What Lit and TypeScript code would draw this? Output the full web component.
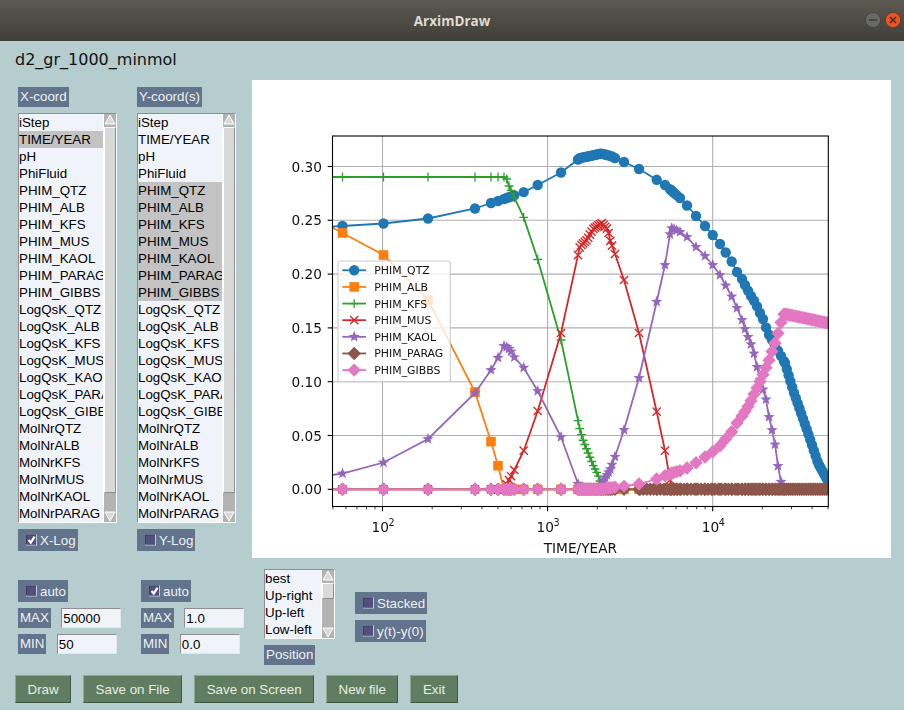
import { LitElement, html, css, svg } from 'lit';
import { customElement, property } from 'lit/decorators.js';

const BASE = 489.3;
const COLORS = ['#1f77b4', '#ff7f0e', '#2ca02c', '#d62728', '#9467bd', '#8c564b', '#e377c2'];
const NAMES = ['PHIM_QTZ', 'PHIM_ALB', 'PHIM_KFS', 'PHIM_MUS', 'PHIM_KAOL', 'PHIM_PARAG', 'PHIM_GIBBS'];

// sample positions, page pixels along the log axis
const XS: number[] = [
  325, 342.5, 383.5, 428, 475, 491, 498, 504, 506.7, 509, 511, 514.3, 523.7, 537.7, 561,
];
for (let x = 578; x < 613; x += 1.7) XS.push(x);
XS.push(615, 624, 639, 656.7, 665, 670, 671.7, 674, 676.7, 680, 687, 696, 705, 712.7, 720, 725.7, 731.7, 737);
for (let x = 742; x < 785; x += 3) XS.push(x);
for (let x = 785; x < 836; x += 1.8) XS.push(x);

// parag sits on the baseline and its markers run almost solid past the first rise
const PARAG_XS = [...XS];
for (let x = 640; x < 785; x += 3.4) PARAG_XS.push(x);

type Pt = [number, number];

const CURVES: Pt[][] = [
  [[325, 227], [342.5, 226], [383.5, 223.5], [428, 218.5], [475, 208.5], [491, 203], [498, 201], [504, 199], [514, 195.5],
    [524, 192], [537.7, 185], [561, 172.5], [580, 158], [590, 156], [601, 153.5], [611, 156], [615, 158], [624, 162], [639, 169],
    [657, 180], [665, 185], [672, 191], [680, 198], [687, 205.5], [696, 216], [705, 226], [712.7, 235], [720, 244], [726, 253],
    [732, 262], [737, 272], [742, 279], [746, 287], [751, 296], [756, 304], [759, 311], [763, 319], [768, 333], [785, 363],
    [793, 390], [807, 430], [818, 463], [830, 485]],
  [[325, 224], [342.5, 233], [383.5, 255], [429, 301], [475, 392], [491, 441.6], [498, 465.7], [504, BASE], [840, BASE]],
  [[325, 177], [504, 177], [506.7, 179], [509, 186], [514, 197], [524, 218], [537.7, 259.5], [561, 340], [580, 430], [583, 440],
    [587, 450], [593, 465], [598, 475], [603, BASE], [840, BASE]],
  [[325, BASE], [504, BASE], [509, 480], [514.3, 470], [523.7, 450.7], [537.7, 411], [561, 333], [580, 246], [587, 240], [593, 229],
    [602, 223], [608, 230], [610, 240], [615, 254], [624, 280], [639, 333], [656.7, 411.7], [665, 450.7], [670, 480], [672, BASE], [840, BASE]],
  [[325, 476], [342.5, 473.5], [383.5, 462.5], [428, 439], [475, 393], [491, 370], [498, 357.7], [504, 346], [507, 347], [510, 349.7],
    [514, 357], [524, 368], [537.7, 391], [561, 437], [580, BASE], [598, BASE], [605, 478], [610, 470], [615, 456.7], [624, 430], [639, 378],
    [656.7, 301.7], [665, 265], [671, 228], [674, 229], [680, 232], [687, 237], [696, 247], [705, 256], [712.7, 265], [720, 275], [726, 286],
    [732, 297], [737, 308], [742, 320], [746, 332], [751.7, 346], [755.7, 359], [758, 373], [766.7, 401.7], [769, 417], [772.7, 433],
    [775.7, 448], [778, 466], [781, 481.7], [785, BASE], [840, BASE]],
  [[325, BASE], [840, BASE]],
  [[325, BASE], [600, BASE], [625, 486], [639, 484], [656.7, 479], [665, 475.7], [673, 472.7], [680, 470.7], [687, 468], [696, 462.7], [705, 457],
    [712.7, 451.7], [720, 445.7], [725.7, 439], [731.7, 431.7], [737, 423], [742, 416], [746.7, 409], [751, 400.7], [760.7, 380], [768, 363],
    [776, 340], [780, 326.7], [783, 314], [790, 315], [830, 323.5]],
];

const interp = (pts: Pt[], x: number) => {
  for (let i = 1; i < pts.length; i++) {
    if (x <= pts[i][0]) {
      const [x0, y0] = pts[i - 1];
      const [x1, y1] = pts[i];
      return y0 + ((y1 - y0) * (x - x0)) / (x1 - x0);
    }
  }
  return pts[pts.length - 1][1];
};

const starPoints = (x: number, y: number, r: number) => {
  const out: string[] = [];
  for (let i = 0; i < 10; i++) {
    const a = (Math.PI * i) / 5 - Math.PI / 2;
    const rr = i % 2 ? r * 0.42 : r;
    out.push(`${(x + rr * Math.cos(a)).toFixed(2)},${(y + rr * Math.sin(a)).toFixed(2)}`);
  }
  return out.join(' ');
};

const marker = (kind: number, x: number, y: number, c: string) => {
  switch (kind) {
    case 0:
      return svg`<circle cx=${x} cy=${y} r="5.2" fill=${c} />`;
    case 1:
      return svg`<rect x=${x - 4.8} y=${y - 4.8} width="9.6" height="9.6" fill=${c} />`;
    case 2:
      return svg`<path d="M${x - 4.4} ${y}H${x + 4.4}M${x} ${y - 4.4}V${y + 4.4}" stroke=${c} stroke-width="1.3" fill="none" />`;
    case 3:
      return svg`<path d="M${x - 4.1} ${y - 4.1}L${x + 4.1} ${y + 4.1}M${x + 4.1} ${y - 4.1}L${x - 4.1} ${y + 4.1}" stroke=${c} stroke-width="1.4" fill="none" />`;
    case 4:
      return svg`<polygon points=${starPoints(x, y, 5.9)} fill=${c} />`;
    default:
      return svg`<path d="M${x} ${y - 6.7}L${x + 6.7} ${y}L${x} ${y + 6.7}L${x - 6.7} ${y}Z" fill=${c} />`;
  }
};

@customElement('plot-figure')
export class PlotFigure extends LitElement {
  static styles = css`
    :host {
      display: block;
      width: 639px;
      height: 478px;
      background: #fff;
    }
    svg {
      display: block;
      filter: blur(0.3px);
    }
    text {
      font-family: 'DejaVu Sans', sans-serif;
      fill: #111;
    }
    .tick {
      font-size: 13.7px;
    }
    .sup {
      font-size: 9.6px;
    }
    .leg {
      font-size: 10.9px;
    }
  `;

  render() {
    const yTicks = [0, 0.05, 0.1, 0.15, 0.2, 0.25, 0.3];
    const yPos = (v: number) => BASE - v * 1076;
    const xPos = (t: number) => 382.5 + 165.1 * (Math.log10(t) - 2);
    const minor: number[] = [];
    for (const d of [10, 100, 1000, 10000]) {
      for (let m = 2; m < 10; m++) {
        const t = d * m;
        if (t >= 50 && t <= 50000) minor.push(xPos(t));
      }
    }
    return html`
      <svg width="639" height="478" viewBox="252 80 639 478">
        <defs>
          <clipPath id="axes"><rect x="332.5" y="136" width="495.8" height="370.5" /></clipPath>
        </defs>
        ${[100, 1000, 10000].map(
          (t) => svg`<line x1=${xPos(t)} x2=${xPos(t)} y1="136" y2="506.5" stroke="#b0b0b0" stroke-width="1.1" />`,
        )}
        ${yTicks.map(
          (v) => svg`<line x1="332.5" x2="828.3" y1=${yPos(v)} y2=${yPos(v)} stroke="#b0b0b0" stroke-width="1.1" />`,
        )}
        <g clip-path="url(#axes)">
          ${CURVES.map((pts, i) => {
            const line = XS.map((x) => `${x},${interp(pts, x).toFixed(2)}`).join(' ');
            const xs = i === 5 ? PARAG_XS : XS;
            return svg`
              <polyline points=${line} fill="none" stroke=${COLORS[i]} stroke-width="1.8" />
              ${xs.map((x) => marker(i, x, interp(pts, x), COLORS[i]))}
            `;
          })}
        </g>
        <rect x="332.5" y="136" width="495.8" height="370.5" fill="none" stroke="#000" stroke-width="1.1" />
        ${yTicks.map(
          (v) => svg`
            <line x1="327.7" x2="332.5" y1=${yPos(v)} y2=${yPos(v)} stroke="#000" stroke-width="1.1" />
            <text class="tick" x="322" y=${yPos(v) + 5} text-anchor="end">${v.toFixed(2)}</text>
          `,
        )}
        ${minor.map((x) => svg`<line x1=${x} x2=${x} y1="506.5" y2="509.3" stroke="#000" stroke-width="0.8" />`)}
        ${[
          [100, '2'],
          [1000, '3'],
          [10000, '4'],
        ].map(
          ([t, e]) => svg`
            <line x1=${xPos(t as number)} x2=${xPos(t as number)} y1="506.5" y2="511.3" stroke="#000" stroke-width="1.1" />
            <text class="tick" x=${xPos(t as number) - 11} y="531.5">10</text>
            <text class="sup" x=${xPos(t as number) + 6} y="525.5">${e}</text>
          `,
        )}
        <text class="tick" x="580.4" y="552.5" text-anchor="middle">TIME/YEAR</text>
        <rect x="338" y="261" width="112.3" height="120.6" rx="2" fill="#fff" fill-opacity="0.8" stroke="#ccc" stroke-width="1.1" />
        ${NAMES.map((name, i) => {
          const y = 270.3 + i * 16.63;
          return svg`
            <line x1="342.3" x2="366" y1=${y} y2=${y} stroke=${COLORS[i]} stroke-width="1.8" />
            ${marker(i, 354.2, y, COLORS[i])}
            <text class="leg" x="374.3" y=${y + 4}>${name}</text>
          `;
        })}
      </svg>
    `;
  }
}

@customElement('list-box')
export class ListBox extends LitElement {
  static styles = css`
    :host {
      display: flex;
      box-sizing: border-box;
      background: #f0f4fa;
      border: 1px solid #8e8e8e;
      border-right-color: #fff;
      border-bottom-color: #fff;
      font: 13.33px 'Liberation Sans', Arial, sans-serif;
      color: #000;
    }
    .items {
      flex: 1;
      min-width: 0;
      overflow: hidden;
      border-top: 1px solid #8e8e8e;
      border-left: 1px solid #8e8e8e;
      margin: -1px 0 0 -1px;
    }
    .item {
      height: 17px;
      line-height: 17px;
      white-space: nowrap;
      overflow: hidden;
    }
    .item.sel {
      background: #c3c3c3;
    }
    .bar {
      flex: none;
      width: 12px;
      display: flex;
      flex-direction: column;
      background: #b3b3b3;
      border-left: 1px solid #fff;
    }
    .arrow {
      flex: none;
      display: block;
      width: 12px;
      height: 11px;
    }
    .thumb {
      flex: none;
      box-sizing: border-box;
      background: #d9d9d9;
      border: 1px solid #fff;
      border-right-color: #8e8e8e;
      border-bottom-color: #8e8e8e;
    }
    .gap {
      flex: 1;
    }
  `;

  @property({ type: Array }) items: string[] = [];
  @property({ type: Array }) selected: string[] = [];
  @property({ type: Number }) thumbTop = 0;
  @property({ type: Number }) thumbHeight = 0;

  render() {
    return html`
      <div class="items">
        ${this.items.map(
          (it) => html`<div class="item ${this.selected.includes(it) ? 'sel' : ''}">${it}</div>`,
        )}
      </div>
      <div class="bar">
        <svg class="arrow" viewBox="0 0 12 11"><path d="M6 1L11 10H1Z" fill="#d9d9d9" stroke="#fff" /></svg>
        <div class="thumb" style="margin-top:${this.thumbTop}px;height:${this.thumbHeight}px"></div>
        <div class="gap"></div>
        <svg class="arrow" viewBox="0 0 12 11"><path d="M6 10L11 1H1Z" fill="#d9d9d9" stroke="#fff" /></svg>
      </div>
    `;
  }
}

const QS = ['QTZ', 'ALB', 'KFS', 'MUS', 'KAOL', 'PARAG', 'GIBBS'];
const COLUMNS = [
  'iStep',
  'TIME/YEAR',
  'pH',
  'PhiFluid',
  ...QS.map((q) => `PHIM_${q}`),
  ...QS.map((q) => `LogQsK_${q}`),
  ...QS.slice(0, 6).map((q) => `MolNr${q}`),
];

@customElement('app-root')
export class AppRoot extends LitElement {
  static styles = css`
    :host {
      display: block;
      width: 904px;
      height: 710px;
      overflow: hidden;
      background: #b5cdce;
      font: 13.33px 'Liberation Sans', Arial, sans-serif;
    }
    .titlebar {
      position: relative;
      height: 41px;
      display: flex;
      align-items: center;
      justify-content: center;
      background: linear-gradient(#5c5a50, #3f3e39);
      color: #dfdbd2;
      font: bold 13.5px 'Open Sans', 'Noto Sans', sans-serif;
    }
    .winbtn {
      position: absolute;
      top: 12px;
      width: 16px;
      height: 16px;
    }
    .winbtn.min {
      right: 23px;
    }
    .winbtn.close {
      right: 3px;
    }
    .file {
      height: 39px;
      padding-left: 15px;
      font: 16px/38px 'DejaVu Sans', sans-serif;
      color: #111;
    }
    .main {
      display: flex;
      height: 478px;
      padding-left: 18px;
    }
    .col {
      width: 99px;
      margin-right: 20px;
      padding-top: 7px;
      display: flex;
      flex-direction: column;
      align-items: flex-start;
    }
    .col list-box {
      width: 99px;
      height: 410px;
      margin-top: 6px;
    }
    .col .check {
      margin-top: 6px;
    }
    plot-figure {
      margin-left: -4px;
    }
    .label {
      display: inline-block;
      box-sizing: border-box;
      height: 20px;
      line-height: 20px;
      padding: 0 2px;
      background: #62738c;
      color: #eef2f4;
    }
    .check {
      display: inline-flex;
      align-items: center;
      box-sizing: border-box;
      height: 22px;
      padding: 0 2px 0 8px;
      background: #62738c;
      color: #eef2f4;
    }
    .box {
      flex: none;
      display: block;
      width: 11px;
      height: 12px;
      margin-right: 3px;
    }
    .lower {
      display: flex;
      height: 117px;
      padding-left: 18px;
    }
    .limits {
      width: 123px;
      padding-top: 22px;
      display: flex;
      flex-direction: column;
      align-items: flex-start;
    }
    .limit {
      display: flex;
      gap: 10.4px;
      margin-top: 6px;
    }
    .limit input {
      box-sizing: border-box;
      width: 60px;
      height: 20px;
      padding: 0 1px;
      border: 1px solid #e4e8ea;
      border-top-color: #8e8e8e;
      border-left-color: #8e8e8e;
      background: #f0f4fa;
      color: #000;
      font: inherit;
      outline: none;
    }
    .position {
      padding-top: 11px;
      width: 91px;
      display: flex;
      flex-direction: column;
      align-items: flex-start;
    }
    .position list-box {
      width: 71px;
      height: 70px;
      margin-bottom: 6px;
    }
    .flags {
      padding-top: 34px;
      display: flex;
      flex-direction: column;
      align-items: flex-start;
      gap: 6px;
    }
    .actions {
      display: flex;
      gap: 12px;
      padding-left: 15px;
    }
    button {
      box-sizing: border-box;
      height: 28px;
      padding: 0 11.5px;
      border: 1px solid #3f5a42;
      border-top-color: #8fa78f;
      border-left-color: #8fa78f;
      background: #5f7d60;
      color: #e8eee4;
      font: inherit;
    }
  `;

  private check(label: string, on: boolean) {
    return html`
      <span class="check">
        <svg class="box" viewBox="0 0 11 12">
          <rect x="0" y="0.5" width="11" height="11" fill="#c9c9d6" />
          <rect x="0" y="0.5" width="10" height="10" fill="#3f3d5c" />
          <rect x="1" y="1.5" width="9" height="9" fill="#534f7d" />
          ${on ? svg`<path d="M2.6 6L4.8 8.6L8.6 2.6" fill="none" stroke="#fff" stroke-width="2.2" />` : ''}
        </svg>
        ${label}
      </span>
    `;
  }

  private limits(auto: boolean, max: string, min: string) {
    return html`
      <div class="limits">
        ${this.check('auto', auto)}
        <div class="limit"><span class="label">MAX</span><input .value=${max} /></div>
        <div class="limit"><span class="label">MIN</span><input .value=${min} /></div>
      </div>
    `;
  }

  render() {
    const ySel = QS.map((q) => `PHIM_${q}`);
    return html`
      <div class="titlebar">
        ArximDraw
        <svg class="winbtn min" viewBox="0 0 16 16">
          <circle cx="8" cy="8" r="7.6" fill="#686864" stroke="#3c3b37" stroke-width="0.6" />
          <path d="M4 8H12" stroke="#2f2f2c" stroke-width="1.2" />
        </svg>
        <svg class="winbtn close" viewBox="0 0 16 16">
          <circle cx="8" cy="8" r="7.6" fill="#e9541f" stroke="#3c3b37" stroke-width="0.6" />
          <path d="M5 5L11 11M11 5L5 11" stroke="#3a2a1c" stroke-width="1.4" />
        </svg>
      </div>
      <div class="file">d2_gr_1000_minmol</div>
      <div class="main">
        <div class="col">
          <span class="label">X-coord</span>
          <list-box .items=${COLUMNS} .selected=${['TIME/YEAR']} .thumbTop=${2} .thumbHeight=${366}></list-box>
          ${this.check('X-Log', true)}
        </div>
        <div class="col">
          <span class="label">Y-coord(s)</span>
          <list-box .items=${COLUMNS} .selected=${ySel} .thumbTop=${2} .thumbHeight=${366}></list-box>
          ${this.check('Y-Log', false)}
        </div>
        <plot-figure></plot-figure>
      </div>
      <div class="lower">
        ${this.limits(false, '50000', '50')} ${this.limits(true, '1.0', '0.0')}
        <div class="position">
          <list-box .items=${['best', 'Up-right', 'Up-left', 'Low-left']} .thumbTop=${2} .thumbHeight=${16}></list-box>
          <span class="label">Position</span>
        </div>
        <div class="flags">${this.check('Stacked', false)} ${this.check('y(t)-y(0)', false)}</div>
      </div>
      <div class="actions">
        <button>Draw</button>
        <button>Save on File</button>
        <button>Save on Screen</button>
        <button>New file</button>
        <button>Exit</button>
      </div>
    `;
  }
}
